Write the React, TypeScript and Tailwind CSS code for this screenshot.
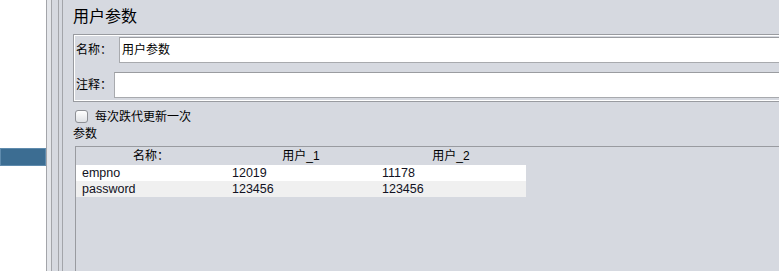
import React from 'react';

const font = { fontFamily: '"Liberation Sans", "Noto Sans CJK SC", sans-serif' };

const rows = [
  { name: 'empno', u1: '12019', u2: '11178' },
  { name: 'password', u1: '123456', u2: '123456' },
];

export default function App() {
  return (
    <div className="w-[779px] h-[271px] overflow-hidden flex bg-[#d6d9e0] text-black" style={font}>
      {/* tree panel */}
      <div className="w-[46px] h-full bg-white pt-[148px] shrink-0">
        <div className="h-[18px] bg-[#3c6d92] border border-[#5f8bad]" />
      </div>

      {/* splitter */}
      <div className="flex h-full shrink-0">
        <div className="w-px bg-[#a3a5aa]" />
        <div className="w-[4px] bg-[#e4e6ea]" />
        <div className="w-px bg-[#a3a5aa]" />
        <div className="w-[6px] bg-[#d6d9e0]" />
        <div className="w-px bg-[#a3a5aa]" />
        <div className="w-[3px] bg-[#d6d9e0]" />
        <div className="w-px bg-[#a3a5aa]" />
      </div>

      {/* main panel */}
      <div className="flex-1 min-w-0 pl-[10px] flex flex-col">
        <div className="h-[34px] flex items-center text-[16px] leading-none pb-px">用户参数</div>

        <div className="border-y border-l border-[#999ba0] -mr-[20px]">
          <div className="border-y border-l border-white pt-px pb-[2px] pl-px flex flex-col gap-[9px]">
            <div className="flex items-center h-[26px]">
              <span className="text-[12px] w-[43px]">名称：</span>
              <div className="flex-1 h-full bg-white border border-[#a8aaae] border-t-[#9a9ca0] flex items-center pl-[2px] text-[12px]">
                用户参数
              </div>
            </div>
            <div className="flex items-center h-[26px]">
              <span className="text-[12px] w-[38px]">注释：</span>
              <div className="flex-1 h-full bg-white border border-[#a8aaae] border-t-[#9a9ca0]" />
            </div>
          </div>
        </div>

        <div className="flex items-center h-[13px] mt-[8px] pl-[2px]">
          <div className="w-[13px] h-[13px] rounded-[3px] border border-[#8e9095] bg-gradient-to-b from-white to-[#dfe1e5]" />
          <span className="text-[12px] ml-[7px]">每次跌代更新一次</span>
        </div>

        <div className="text-[12px] leading-none mt-[4px] h-[14px] flex items-center">参数</div>

        <div className="mt-[5px] ml-[2px] flex-1 border-t border-l border-[#999ba0] -mr-[20px]">
          <div className="flex h-[18px] items-center text-[12px]">
            <div className="w-[150px] text-center">名称：</div>
            <div className="w-[150px] text-center">用户_1</div>
            <div className="w-[150px] text-center">用户_2</div>
          </div>
          {rows.map((r, i) => (
            <div
              key={r.name}
              className={`flex w-[450px] h-[16px] items-center text-[12.5px] text-[#111122] ${i % 2 === 0 ? 'bg-white' : 'bg-[#f0f0f0]'}`}
            >
              <div className="w-[150px] pl-[6px]">{r.name}</div>
              <div className="w-[150px] pl-[6px]">{r.u1}</div>
              <div className="w-[150px] pl-[6px]">{r.u2}</div>
            </div>
          ))}
        </div>
      </div>
    </div>
  );
}
